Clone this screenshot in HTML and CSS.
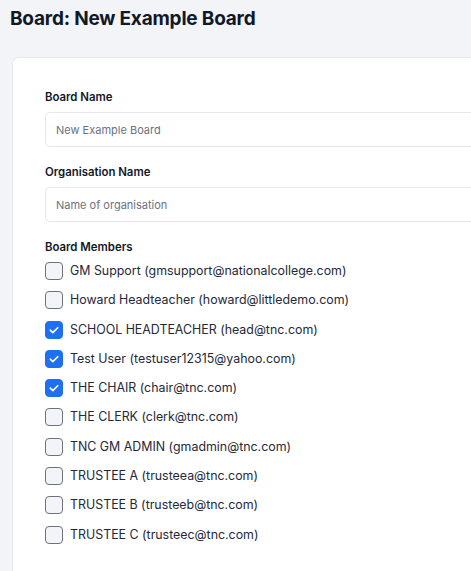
FILE: index.html
```html
<!DOCTYPE html>
<html lang="en">
<head>
<meta charset="utf-8">
<title>Board: New Example Board</title>
<link rel="stylesheet" href="styles.css">
</head>
<body>
<main class="page">
  <h1 class="page-title">Board: New Example Board</h1>
  <section class="card">
    <form class="board-form">
      <div class="field">
        <label class="field-label" for="board-name">Board Name</label>
        <input class="text-input" id="board-name" type="text" placeholder="New Example Board">
      </div>
      <div class="field">
        <label class="field-label" for="org-name">Organisation Name</label>
        <input class="text-input" id="org-name" type="text" placeholder="Name of organisation">
      </div>
      <div class="field">
        <span class="field-label">Board Members</span>
        <ul class="member-list">
          <li class="member"><span class="check"></span><span class="member-name">GM Support (gmsupport@nationalcollege.com)</span></li>
          <li class="member"><span class="check"></span><span class="member-name">Howard Headteacher (howard@littledemo.com)</span></li>
          <li class="member"><span class="check is-checked"><svg viewBox="0 0 18 18"><path d="M4.8 9.2l2.9 2.8 5.5-5.6"/></svg></span><span class="member-name">SCHOOL HEADTEACHER (head@tnc.com)</span></li>
          <li class="member"><span class="check is-checked"><svg viewBox="0 0 18 18"><path d="M4.8 9.2l2.9 2.8 5.5-5.6"/></svg></span><span class="member-name">Test User (testuser12315@yahoo.com)</span></li>
          <li class="member"><span class="check is-checked"><svg viewBox="0 0 18 18"><path d="M4.8 9.2l2.9 2.8 5.5-5.6"/></svg></span><span class="member-name">THE CHAIR (chair@tnc.com)</span></li>
          <li class="member"><span class="check"></span><span class="member-name">THE CLERK (clerk@tnc.com)</span></li>
          <li class="member"><span class="check"></span><span class="member-name">TNC GM ADMIN (gmadmin@tnc.com)</span></li>
          <li class="member"><span class="check"></span><span class="member-name">TRUSTEE A (trusteea@tnc.com)</span></li>
          <li class="member"><span class="check"></span><span class="member-name">TRUSTEE B (trusteeb@tnc.com)</span></li>
          <li class="member"><span class="check"></span><span class="member-name">TRUSTEE C (trusteec@tnc.com)</span></li>
        </ul>
      </div>
    </form>
  </section>
</main>
</body>
</html>
```

FILE: styles.css
```css
html, body {
  margin: 0;
  padding: 0;
  background: #f3f4f8;
}

body {
  font-family: "Inter", "Open Sans", sans-serif;
  color: #1f2937;
}

.page {
  padding: 0 0 0 10px;
}

.page-title {
  margin: 0;
  padding-top: 7px;
  height: 57px;
  box-sizing: border-box;
  font-size: 19px;
  line-height: 24px;
  font-weight: 700;
  color: #111827;
  letter-spacing: -0.2px;
}

.card {
  margin-left: 2px;
  background: #ffffff;
  border: 1px solid #e6e8ef;
  border-right: none;
  border-radius: 7px 0 0 7px;
  padding: 31px 0 40px 32px;
}

.board-form {
  display: flex;
  flex-direction: column;
  gap: 17px;
}

.field {
  display: flex;
  flex-direction: column;
  gap: 7px;
}

.field-label {
  font-size: 11.4px;
  line-height: 16px;
  font-weight: 600;
  color: #111827;
}

.text-input {
  width: 100%;
  box-sizing: border-box;
  height: 35px;
  border: 1px solid #e5e7ee;
  border-right: none;
  border-radius: 5px 0 0 5px;
  padding: 0 10px;
  font-family: inherit;
  font-size: 11px;
  background: #fff;
  outline: none;
}

.text-input::placeholder {
  color: #6b7280;
}

.member-list {
  list-style: none;
  margin: 0;
  padding: 0;
  display: flex;
  flex-direction: column;
  gap: 11.3px;
}

.member {
  display: flex;
  align-items: center;
  gap: 7px;
  height: 18px;
}

.check {
  width: 18px;
  height: 18px;
  box-sizing: border-box;
  border: 1px solid #6b7280;
  border-radius: 4px;
  background: #f3f4f8;
  flex: none;
}

.check.is-checked {
  background: #1f6ff2;
  border-color: #1f6ff2;
}

.check svg {
  display: block;
  width: 16px;
  height: 16px;
  fill: none;
  stroke: #ffffff;
  stroke-width: 1.8;
  stroke-linecap: round;
  stroke-linejoin: round;
}

.member-name {
  font-size: 12.4px;
  line-height: 16px;
  color: #1f2937;
}
```
